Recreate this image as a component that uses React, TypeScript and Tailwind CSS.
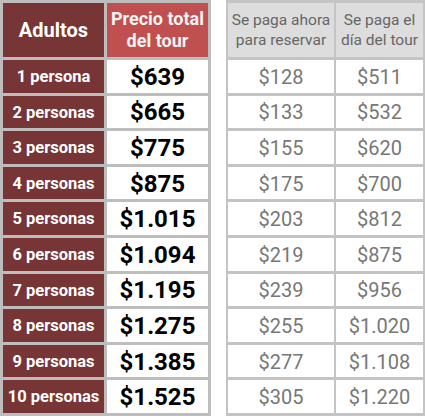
import React from "react";

const rows = [
  ["1 persona", "$639", "$128", "$511"],
  ["2 personas", "$665", "$133", "$532"],
  ["3 personas", "$775", "$155", "$620"],
  ["4 personas", "$875", "$175", "$700"],
  ["5 personas", "$1.015", "$203", "$812"],
  ["6 personas", "$1.094", "$219", "$875"],
  ["7 personas", "$1.195", "$239", "$956"],
  ["8 personas", "$1.275", "$255", "$1.020"],
  ["9 personas", "$1.385", "$277", "$1.108"],
  ["10 personas", "$1.525", "$305", "$1.220"],
];

export default function App() {
  return (
    <div
      className="w-[425px] h-[418px] bg-white flex items-start"
      style={{ fontFamily: "Roboto, 'Liberation Sans', sans-serif" }}
    >
      <div className="w-[211px] h-[416px] bg-[#bdbdbd] p-[3px] grid grid-cols-[101px_101px] grid-rows-[54px_repeat(10,minmax(0,1fr))] gap-[3px]">
        <div className="bg-[#773535] text-white font-bold text-[20px] leading-none flex items-center justify-center">
          Adultos
        </div>
        <div className="bg-[#c0504f] text-[#f3f3f3] font-bold text-[18px] leading-[22px] flex items-center justify-center text-center whitespace-nowrap">
          Precio total
          <br />
          del tour
        </div>
        {rows.map((r) => (
          <React.Fragment key={r[0]}>
            <div className="bg-[#773535] text-white font-bold text-[16.5px] leading-none flex items-center justify-center whitespace-nowrap pt-[2px]">
              {r[0]}
            </div>
            <div className="bg-white text-black font-bold text-[24px] leading-none flex items-center justify-center pt-[1px]">
              {r[1]}
            </div>
          </React.Fragment>
        ))}
      </div>
      <div className="ml-[15px] w-[199px] h-[416px] bg-[#c4c4c4] px-[2px] py-[3px] grid grid-cols-[106px_87px] grid-rows-[54px_repeat(10,minmax(0,1fr))] gap-x-[2px] gap-y-[3px]">
        <div className="bg-[#dddddd] text-[#666666] text-[15.5px] leading-[20px] flex items-center justify-center text-center whitespace-nowrap">
          Se paga ahora
          <br />
          para reservar
        </div>
        <div className="bg-[#dddddd] text-[#666666] text-[15.5px] leading-[20px] flex items-center justify-center text-center whitespace-nowrap">
          Se paga el
          <br />
          día del tour
        </div>
        {rows.map((r) => (
          <React.Fragment key={r[0]}>
            <div className="bg-white text-[#777777] text-[20px] leading-none flex items-center justify-center pt-[1px]">
              {r[2]}
            </div>
            <div className="bg-white text-[#777777] text-[20px] leading-none flex items-center justify-center pt-[1px]">
              {r[3]}
            </div>
          </React.Fragment>
        ))}
      </div>
    </div>
  );
}
